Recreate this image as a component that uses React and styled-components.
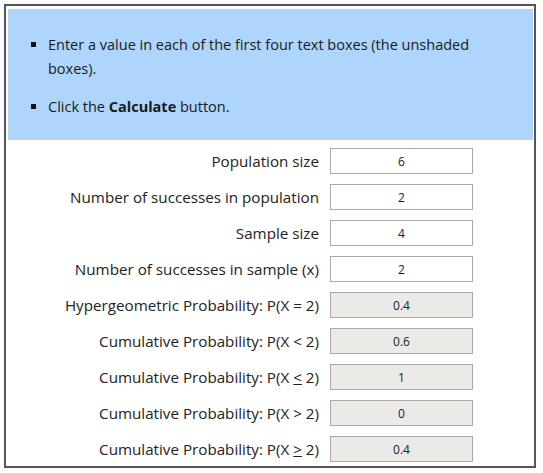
import styled, { createGlobalStyle } from 'styled-components';

const GlobalStyle = createGlobalStyle`
body{
  margin:0;
  background:#fff;
  font-family:"Open Sans", "Noto Sans", sans-serif;
}
`;

//marco exterior
const Frame = styled.div`
margin:4px 0 0 4px;
width:525px;
height:457px;
border:2px solid #555;
padding:3px 1px 0 2px;
box-sizing:content-box;
`;

//caja azul con instrucciones
const Instructions = styled.ul`
margin:0;
padding:24px 20px 22px 40px;
list-style:none;
background:#aed6fd;
height:131px;
box-sizing:border-box;
`;
const Item = styled.li`
position:relative;
font-size:14.5px;
line-height:24px;
color:#1a1a1a;
margin-bottom:14px;
&:last-child{ margin-bottom:0; }
&::before{
  content:"";
  position:absolute;
  left:-17px;
  top:9px;
  width:5px;
  height:5px;
  background:#111;
}
`;

const Form = styled.div`
display:grid;
grid-template-columns:1fr 143px;
grid-auto-rows:26px;
column-gap:11px;
row-gap:10px;
padding:8px 60px 0 0;
`;
const Label = styled.span`
font-size:15.2px;
color:#222;
text-align:right;
line-height:26px;
white-space:pre;
`;
const Box = styled.div`
height:26px;
box-sizing:border-box;
border:1px solid #aaa;
background:${({shaded}) => shaded ? '#ebeae6' : '#fff'};
font-size:12px;
color:#222;
display:flex;
align-items:center;
justify-content:center;
`;

const rows = [
  { label: 'Population size', value: '6' },
  { label: 'Number of successes in population', value: '2' },
  { label: 'Sample size', value: '4' },
  { label: 'Number of successes in sample (x)', value: '2' },
  { label: 'Hypergeometric Probability: P(X = 2)', value: '0.4', shaded: true },
  { label: 'Cumulative Probability: P(X < 2)', value: '0.6', shaded: true },
  { label: <>Cumulative Probability: P(X <u>&lt;</u> 2)</>, value: '1', shaded: true },
  { label: 'Cumulative Probability: P(X > 2)', value: '0', shaded: true },
  { label: <>Cumulative Probability: P(X <u>&gt;</u> 2)</>, value: '0.4', shaded: true },
];

export default function App() {
  return (
    <>
      <GlobalStyle />
      <Frame>
        <Instructions>
          <Item>Enter a value in each of the first four text boxes (the unshaded boxes).</Item>
          <Item>Click the <b>Calculate</b> button.</Item>
        </Instructions>
        <Form>
          {rows.map((r, i) => (
            <>
              <Label key={'l' + i}>{r.label}</Label>
              <Box key={'b' + i} shaded={r.shaded}>{r.value}</Box>
            </>
          ))}
        </Form>
      </Frame>
    </>
  );
}
